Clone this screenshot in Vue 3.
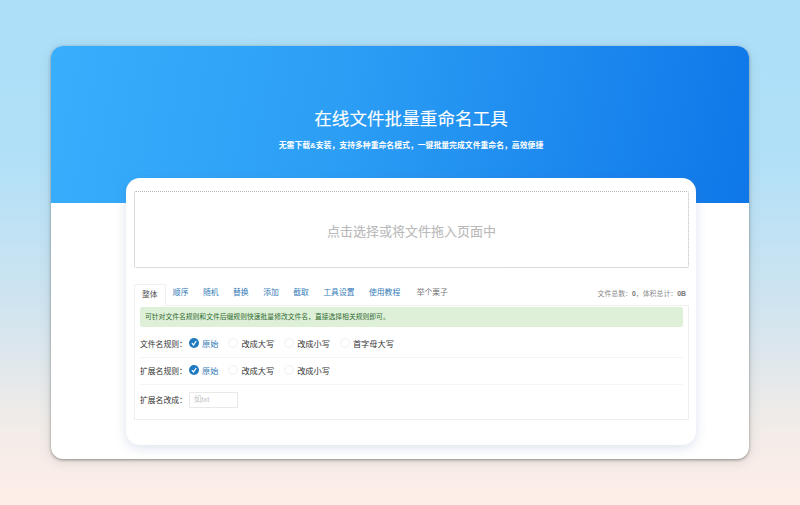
<template>
  <div class="page">
    <div class="panel">
      <div class="hero">
        <h1 class="hero-title">在线文件批量重命名工具</h1>
        <p class="hero-sub">无需下载&amp;安装，支持多种重命名模式，一键批量完成文件重命名，高效便捷</p>
      </div>

      <div class="card">
        <div class="drop">点击选择或将文件拖入页面中</div>

        <div class="tabs">
          <span
            v-for="(tab, i) in tabs"
            :key="tab"
            class="tab"
            :class="{ active: i === 0, plain: i === tabs.length - 1 }"
          >{{ tab }}</span>
          <span class="stats">文件总数：<b>0</b>，体积总计：<b>0B</b></span>
        </div>

        <div class="tab-body">
          <div class="tip">可针对文件名规则和文件后缀规则快速批量修改文件名，直接选择相关规则即可。</div>

          <div v-for="rule in rules" :key="rule.label" class="row">
            <span class="label">{{ rule.label }}：</span>
            <span
              v-for="(opt, i) in rule.options"
              :key="opt"
              class="radio"
              :class="{ checked: i === 0 }"
            >
              <span class="dot">
                <svg v-if="i === 0" viewBox="0 0 10 10" width="10" height="10">
                  <path d="M2.9 5.1 4.5 7 7.2 3" fill="none" stroke="#fff" stroke-width="1.3" />
                </svg>
              </span>
              {{ opt }}
            </span>
          </div>

          <div class="row last">
            <span class="label">扩展名改成：</span>
            <input class="ext" type="text" placeholder="如txt" />
          </div>
        </div>
      </div>
    </div>
  </div>
</template>

<script setup>
const tabs = ['整体', '顺序', '随机', '替换', '添加', '截取', '工具设置', '使用教程', '举个栗子']

const rules = [
  { label: '文件名规则', options: ['原始', '改成大写', '改成小写', '首字母大写'] },
  { label: '扩展名规则', options: ['原始', '改成大写', '改成小写'] },
]
</script>

<style>
html, body { margin: 0; padding: 0; }
</style>

<style scoped>
.page {
  height: 505px;
  box-sizing: border-box;
  padding: 46px 51px 0;
  overflow: hidden;
  background: linear-gradient(180deg, #addff9 0%, #b0e0f8 30%, #cfe4f0 60%, #f3ece8 85%, #feeee8 100%);
  font-family: "Liberation Sans", "Noto Sans CJK SC", sans-serif;
}
.panel {
  height: 413px;
  box-sizing: border-box;
  background: #fff;
  border-radius: 12px;
  box-shadow: 0 1px 3px rgba(60, 60, 50, 0.5), 0 2px 12px rgba(80, 90, 100, 0.18);
  overflow: hidden;
}
.hero {
  height: 157px;
  box-sizing: border-box;
  padding: 61px 0 0 22px;
  text-align: center;
  color: #fff;
  background: linear-gradient(100deg, #38aefc 0%, #2c9ff5 40%, #0f77e9 100%);
}
.hero-title {
  margin: 0;
  font-size: 17.6px;
  line-height: 25px;
  font-weight: 400;
  -webkit-text-stroke: 0.12px #fff;
}
.hero-sub {
  margin: 8px 0 0;
  font-size: 7.85px;
  line-height: 12px;
  font-weight: 700;
}

.card {
  width: 570px;
  height: 267px;
  box-sizing: border-box;
  margin: -25px 0 0 75px;
  padding: 13px 7px 0 8px;
  background: #fff;
  border-radius: 14px;
  box-shadow: 0 3px 12px rgba(90, 110, 170, 0.2);
  position: relative;
}
.drop {
  height: 77px;
  box-sizing: border-box;
  padding-top: 1px;
  display: flex;
  align-items: center;
  justify-content: center;
  border: 1px dotted #b8b8b8;
  border-radius: 2px;
  font-size: 13px;
  color: #b9b9b9;
  -webkit-text-stroke: 0.1px #b9b9b9;
}

.tabs {
  display: flex;
  align-items: center;
  height: 22px;
  margin-top: 15px;
  font-size: 7.8px;
}
.tab {
  padding: 0 7.25px;
  height: 22px;
  line-height: 19px;
  color: #337ab7;
  box-sizing: border-box;
}
.tab.active {
  color: #555;
  background: #fff;
  border: 1px solid #f0f0f0;
  border-bottom-color: #fff;
  padding: 0 7px;
  margin-bottom: -1px;
  position: relative;
  z-index: 1;
}
.tab.plain { color: #777; margin-left: 2px; }
.stats {
  margin-left: auto;
  padding: 0 3px 3px 0;
  font-size: 6.9px;
  color: #888;
}
.stats b { color: #777; }

.tab-body {
  height: 115px;
  box-sizing: border-box;
  padding: 1px 5px 0;
  border: 1px solid #eee;
}
.tip {
  height: 20px;
  line-height: 20px;
  padding: 0 5px;
  margin-bottom: 4px;
  border-radius: 2px;
  background: #dff0d8;
  color: #2f6b30;
  font-size: 6.8px;
}
.row {
  display: flex;
  align-items: center;
  height: 27px;
  padding-bottom: 2px;
  border-bottom: 1px solid #f5f5f5;
  font-size: 8.2px;
  color: #333;
  box-sizing: border-box;
}
.row.last { border-bottom: 0; height: 30px; padding-bottom: 1px; }
.label { width: 49px; flex-shrink: 0; white-space: nowrap; font-size: 7.8px; }
.radio {
  display: inline-flex;
  align-items: center;
  gap: 3px;
  margin-right: 10px;
}
.radio.checked { color: #337ab7; }
.dot {
  display: inline-block;
  width: 10px;
  height: 10px;
  box-sizing: border-box;
  border-radius: 50%;
  border: 1px solid #f0f0f0;
  background: #fff;
  overflow: hidden;
}
.radio.checked .dot { border: 0; background: #1f7ac0; }
.dot svg { display: block; }
.ext {
  width: 49px;
  height: 16px;
  box-sizing: border-box;
  padding: 0 4px;
  border: 1px solid #e8e8e8;
  outline: none;
  font: inherit;
  font-size: 7.5px;
  border-radius: 1px;
}
.ext::placeholder { color: #c0c0c0; }
</style>
